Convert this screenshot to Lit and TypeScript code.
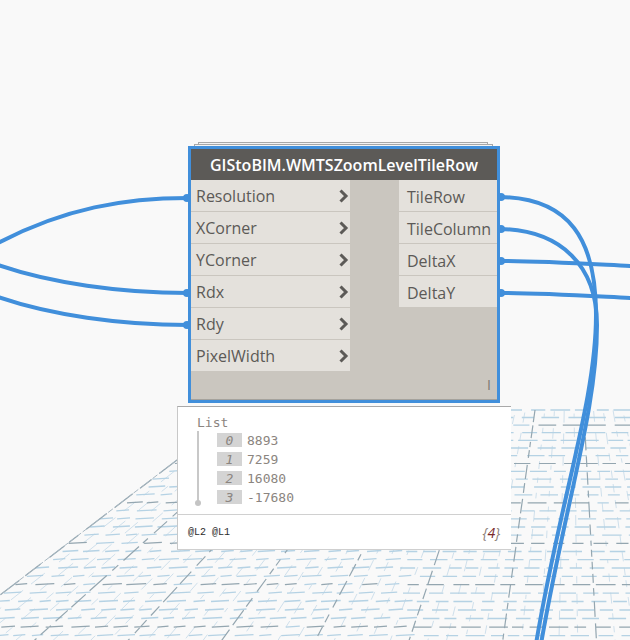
import { LitElement, html, css, svg } from 'lit';
import { customElement } from 'lit/decorators.js';

// ground grid: perspective lines converge on this point
const VP_X = 570;
const VP_Y = 160;
const TOP_Y = 410;

function rng(seed: number) {
  let s = seed;
  return () => {
    s = (s * 1664525 + 1013904223) % 4294967296;
    return s / 4294967296;
  };
}

function leftEdge(y: number) {
  return 245 - (y - 408) / 0.76;
}

function buildGrid() {
  const r = rng(7);
  let light = '';
  let dark = '';
  let pale = '';

  // rows of short dashes
  for (let i = 0; i < 32; i++) {
    const y = TOP_Y + 7.5 * i + 0.02 * i * i;
    const major = i % 5 === 2;
    let x = leftEdge(y) + r() * 8;
    while (x < 630) {
      const len = 11 + r() * 9;
      const gap = 4 + r() * 6;
      const tilt = x < 400 ? -1 : 0;
      const seg = `M${x.toFixed(1)},${y.toFixed(1)}l${len.toFixed(1)},${tilt}`;
      if (major && r() > 0.12) dark += seg;
      else light += seg;
      x += len + gap;
    }
  }

  // dashed lines running toward the vanishing point
  for (let j = 0; j < 40; j++) {
    const u = -1.31 + j * 0.039;
    const major = j % 5 === 0;
    let y = TOP_Y + r() * 6;
    while (y < 640) {
      const len = 4 + r() * (major ? 12 : 8);
      const gap = major ? 3 + r() * 4 : 5 + r() * 8;
      const y2 = y + len;
      const seg = `M${(VP_X + u * (y - VP_Y)).toFixed(1)},${y.toFixed(1)}L${(VP_X + u * (y2 - VP_Y)).toFixed(1)},${y2.toFixed(1)}`;
      if (major) dark += seg;
      else pale += seg;
      y = y2 + gap;
    }
  }
  return { light, dark, pale };
}

const grid = buildGrid();

const WIRES = [
  'M-2,243 C65,208 125,198 188,198',
  'M-2,265 C50,283 120,293 188,293',
  'M-2,297 C50,315 120,325 188,325',
  'M500,197 C570,198 596,240 596,315 C596,400 560,500 536,644',
  'M500,229 C560,230 597,265 597,325 C597,410 566,500 541,644',
  'M500,261 C540,261 590,264 632,266',
  'M500,293 C540,293 590,296 632,298',
];

const PORTS = [
  [187, 198], [187, 293], [187, 325],
  [501, 197], [501, 229], [501, 261], [501, 293],
];

const INPUTS = ['Resolution', 'XCorner', 'YCorner', 'Rdx', 'Rdy', 'PixelWidth'];
const OUTPUTS = ['TileRow', 'TileColumn', 'DeltaX', 'DeltaY'];
const VALUES = ['8893', '7259', '16080', '-17680'];

@customElement('app-root')
export class AppRoot extends LitElement {
  static styles = css`
    :host {
      display: block;
      position: relative;
      width: 630px;
      height: 640px;
      overflow: hidden;
      background: #f9f9f9;
    }
    * {
      box-sizing: border-box;
    }
    .layer {
      position: absolute;
      left: 0;
      top: 0;
    }
    .stack {
      position: absolute;
      background: #f4f4f4;
      border: 1px solid #a8a8a8;
    }
    .stack.back {
      left: 198px;
      top: 142px;
      width: 290px;
      height: 20px;
    }
    .stack.front {
      left: 194px;
      top: 144px;
      width: 299px;
      height: 20px;
    }
    .node {
      position: absolute;
      left: 188px;
      top: 146px;
      width: 312px;
      height: 257px;
      border: 3px solid #418fdb;
      display: flex;
      flex-direction: column;
      font-family: 'Open Sans', sans-serif;
    }
    .title {
      height: 31px;
      flex: none;
      background: #5c5a57;
      color: #fff;
      font-size: 16px;
      font-weight: 600;
      line-height: 32px;
      text-align: center;
      white-space: nowrap;
    }
    .body {
      flex: 1;
      display: flex;
      flex-direction: column;
      background: #cac6bf;
      border-bottom: 1px solid #a5a29c;
    }
    .ports {
      display: flex;
      justify-content: space-between;
      align-items: flex-start;
    }
    .col {
      display: flex;
      flex-direction: column;
      gap: 1px;
    }
    .col.in {
      width: 159px;
    }
    .col.out {
      width: 98px;
    }
    .row {
      height: 31px;
      background: #e4e1dc;
      color: #5c5a57;
      font-size: 16px;
      display: flex;
      align-items: center;
      justify-content: space-between;
      white-space: nowrap;
    }
    .col.out .row span {
      padding-top: 2px;
    }
    .col.in .row {
      padding: 0 1px 0 5px;
    }
    .col.out .row {
      padding-left: 8px;
    }
    .chev {
      display: block;
      width: 10px;
      height: 14px;
    }
    .lace {
      margin-top: auto;
      padding: 0 6px 7px 0;
      text-align: right;
      font-size: 14px;
      line-height: 14px;
      color: #7c7872;
    }
    .bubble {
      position: absolute;
      left: 177px;
      top: 406px;
      width: 334px;
      height: 144px;
      background: #fff;
      border-top: 1px solid #a9a9a9;
      border-left: 1px solid #c8c8c8;
      border-bottom: 1px solid #cfcfcf;
      display: flex;
      flex-direction: column;
      font-family: 'DejaVu Sans Mono', monospace;
      color: #8b8580;
    }
    .tree {
      height: 108px;
      flex: none;
      padding: 9px 0 0 19px;
      border-bottom: 1px solid #d0d0d0;
      font-size: 13px;
    }
    .tree-head {
      line-height: 14px;
    }
    .tree-body {
      display: flex;
      margin-top: 1px;
    }
    .spine {
      position: relative;
      width: 2px;
      height: 72px;
      background: #c8c8c8;
      flex: none;
    }
    .spine::after {
      content: '';
      position: absolute;
      left: -2px;
      bottom: -3px;
      width: 6px;
      height: 6px;
      border-radius: 50%;
      background: #c4c4c4;
    }
    .items {
      display: flex;
      flex-direction: column;
      gap: 5px;
      margin-left: 18px;
      margin-top: 2px;
    }
    .item {
      display: flex;
      gap: 5px;
      height: 14px;
      line-height: 15px;
    }
    .idx {
      width: 25px;
      background: #d4d4d4;
      text-align: center;
      font-style: italic;
    }
    .foot {
      flex: 1;
      display: flex;
      align-items: center;
      justify-content: space-between;
      padding: 0 11px 0 10px;
    }
    .levels {
      font-family: 'Liberation Mono', monospace;
      font-size: 10px;
      color: #2c2c2c;
    }
    .count {
      font-family: 'Open Sans', sans-serif;
      font-style: italic;
      font-size: 14px;
      color: #8b8078;
    }
    .count b {
      font-weight: 400;
      color: #7a2a2a;
    }
  `;

  chevron() {
    return html`<svg class="chev" viewBox="0 0 10 14">
      <path d="M1.5,1.5 L7,7 L1.5,12.5" fill="none" stroke="#5c5a57" stroke-width="3" />
    </svg>`;
  }

  render() {
    return html`
      <svg class="layer" width="630" height="640" viewBox="0 0 630 640">
        <path d=${grid.pale} fill="none" stroke="#cfe0ec" stroke-width="1" />
        <path d=${grid.light} fill="none" stroke="#b5d2e4" stroke-width="1.3" />
        <path d=${grid.dark} fill="none" stroke="#94a6b0" stroke-width="1.2" />
        <path d="M0,595 L245,408" fill="none" stroke="#a9b8c2" stroke-width="1" stroke-dasharray="6 2" />
        ${WIRES.map(
          (d) => svg`<path d=${d} fill="none" stroke="#418fdb" stroke-width="4" />`
        )}
        ${PORTS.map(([x, y]) => svg`<circle cx=${x} cy=${y} r="4" fill="#418fdb" />`)}
      </svg>

      <div class="stack back"></div>
      <div class="stack front"></div>

      <div class="node">
        <div class="title">GIStoBIM.WMTSZoomLevelTileRow</div>
        <div class="body">
          <div class="ports">
            <div class="col in">
              ${INPUTS.map(
                (n) => html`<div class="row"><span>${n}</span>${this.chevron()}</div>`
              )}
            </div>
            <div class="col out">
              ${OUTPUTS.map((n) => html`<div class="row"><span>${n}</span></div>`)}
            </div>
          </div>
          <div class="lace">I</div>
        </div>
      </div>

      <div class="bubble">
        <div class="tree">
          <div class="tree-head">List</div>
          <div class="tree-body">
            <div class="spine"></div>
            <div class="items">
              ${VALUES.map(
                (v, i) => html`<div class="item"><span class="idx">${i}</span><span>${v}</span></div>`
              )}
            </div>
          </div>
        </div>
        <div class="foot">
          <span class="levels">@L2 @L1</span>
          <span class="count">{<b>4</b>}</span>
        </div>
      </div>
    `;
  }
}
